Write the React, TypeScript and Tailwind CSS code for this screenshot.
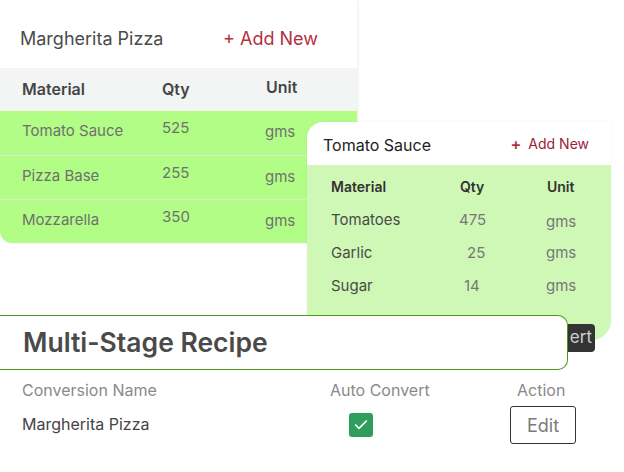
import { Check } from "lucide-react";

const pizzaRows = [
  { name: "Tomato Sauce", qty: "525", unit: "gms" },
  { name: "Pizza Base", qty: "255", unit: "gms" },
  { name: "Mozzarella", qty: "350", unit: "gms" },
];

const sauceRows = [
  { name: "Tomatoes", qty: "475", unit: "gms", qtyPad: "pl-[1px]", unitPad: "pt-[3px]" },
  { name: "Garlic", qty: "25", unit: "gms", qtyPad: "pl-[9px]", unitPad: "pt-[1px]" },
  { name: "Sugar", qty: "14", unit: "gms", qtyPad: "pl-[6px]", unitPad: "pt-[1px]" },
];

export default function App() {
  return (
    <div className="relative w-[624px] h-[472px] overflow-hidden bg-white font-['Inter',sans-serif]">
      {/* back card: Margherita Pizza */}
      <div className="absolute left-0 top-0 w-[357px] rounded-bl-xl overflow-hidden shadow-[1px_0_3px_rgba(0,0,0,0.08)]">
        <div className="h-[68px] flex items-center pl-5 pt-2 bg-white">
          <span className="w-[203px] text-[18px] text-[#4b4b4b]">Margherita Pizza</span>
          <span className="text-[18px] text-[#b4303f]">+ Add New</span>
        </div>
        <div className="h-[43px] bg-[#f3f5f5] grid grid-cols-[140px_104px_1fr] items-center pl-[22px] text-[16px] font-semibold text-[#454545]">
          <span className="-mt-[2px]">Material</span>
          <span className="-mt-[2px]">Qty</span>
          <span className="-mt-[6px]">Unit</span>
        </div>
        <div className="bg-[#b1fd85]">
          {pizzaRows.map((r, i) => (
            <div
              key={r.name}
              className={`h-[44px] grid grid-cols-[140px_103px_1fr] pl-[22px] pt-[9px] text-[15px] text-[#707070] ${i > 0 ? "border-t border-[#dfe8d8]" : ""}`}
            >
              <span>{r.name}</span>
              <span className="-mt-[3px]">{r.qty}</span>
              <span className="mt-[1px]">{r.unit}</span>
            </div>
          ))}
        </div>
      </div>

      {/* front card: Tomato Sauce */}
      <div className="absolute left-[307px] top-[122px] w-[304px] h-[218px] rounded-tl-2xl rounded-br-[20px] overflow-hidden bg-[#cff7b5] shadow-[0_0_3px_rgba(0,0,0,0.06)]">
        <div className="h-[43px] bg-white flex items-center pl-4 pr-[22px] justify-between">
          <span className="text-[16px] text-[#222222] mt-[2px]">Tomato Sauce</span>
          <span className="text-[14px] text-[#9a2236] flex items-center gap-[7px]">
            <span className="text-[16px] font-semibold text-[#b4303f]">+</span>
            Add New
          </span>
        </div>
        <div className="grid grid-cols-[127px_88px_1fr] pl-6 text-[15px]">
          <span className="h-[43px] flex items-center font-semibold text-[14px] text-[#333333]">Material</span>
          <span className="h-[43px] flex items-center pl-[2px] font-semibold text-[14px] text-[#333333]">Qty</span>
          <span className="h-[43px] flex items-center pl-[1px] font-semibold text-[14px] text-[#333333]">Unit</span>
          {sauceRows.map((r) => (
            <div key={r.name} className="contents">
              <span className="h-[33px] pt-[1px] text-[#4a4a4a]">{r.name}</span>
              <span className={`h-[33px] pt-[1px] text-[#777777] ${r.qtyPad}`}>{r.qty}</span>
              <span className={`h-[33px] text-[#777777] ${r.unitPad}`}>{r.unit}</span>
            </div>
          ))}
        </div>
      </div>

      {/* dark convert button peeking out */}
      <div className="absolute left-[540px] top-[324px] w-[55px] h-[28px] rounded bg-[#333333] flex items-center justify-end pr-[3px] text-[17px] text-[#cfcfcf]">
        ert
      </div>

      {/* Multi-Stage Recipe */}
      <div className="absolute left-0 top-[315px] w-[568px] h-[55px] bg-white border border-l-0 border-[#4d9b1e] rounded-r-[10px] flex items-center pl-[23px]">
        <span className="text-[26.5px] font-semibold text-[#4a4a4a]">Multi-Stage Recipe</span>
      </div>

      <div className="absolute left-0 top-[378px] w-[624px]">
        <div className="grid grid-cols-[308px_187px_1fr] pl-[22px] text-[16px] text-[#8a8a8a]">
          <span>Conversion Name</span>
          <span>Auto Convert</span>
          <span>Action</span>
        </div>
        <div className="grid grid-cols-[327px_161px_1fr] items-center pl-[22px] mt-[4px]">
          <span className="text-[16px] text-[#444444] -mt-[3px]">Margherita Pizza</span>
          <span className="w-6 h-6 rounded-[3px] bg-[#2f9d5c] flex items-center justify-center">
            <Check className="w-4 h-4 text-white" strokeWidth={2.5} />
          </span>
          <span className="w-[66px] h-[38px] border border-[#333333] rounded-[3px] flex items-center justify-center text-[18px] text-[#7a7a7a]">
            Edit
          </span>
        </div>
      </div>
    </div>
  );
}
